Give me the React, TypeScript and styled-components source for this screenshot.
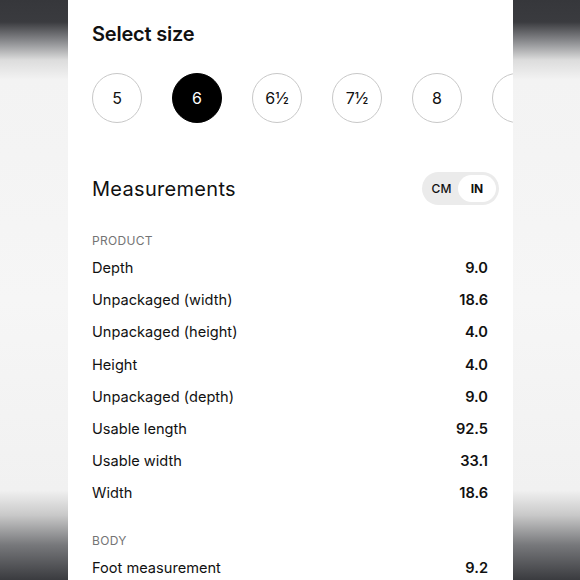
import React, { FC, useState } from "react";
import styled, { createGlobalStyle } from "styled-components";

const GlobalStyle = createGlobalStyle`
  html, body {
    margin: 0;
    padding: 0;
  }
  body {
    font-family: Inter, "Noto Sans", "Liberation Sans", sans-serif;
    color: #111;
    -webkit-font-smoothing: antialiased;
  }
`;

const Backdrop = styled.div`
  width: 580px;
  height: 580px;
  overflow: hidden;
  display: flex;
  padding-left: 68px;
  box-sizing: border-box;
  background: linear-gradient(
    180deg,
    #36373b 0px,
    #3a3b3f 22px,
    #8d8e91 42px,
    #dcdcdc 60px,
    #f3f3f3 80px,
    #f6f6f6 300px,
    #f1f1f1 490px,
    #c9c9c9 515px,
    #77787b 545px,
    #3a3b3f 580px
  );
`;

const Panel = styled.div`
  width: 445px;
  height: 580px;
  background: #fff;
  overflow: hidden;
  box-sizing: border-box;
  padding: 22px 25px 0 24px;
`;

const Title = styled.h2`
  margin: 0;
  font-size: 20px;
  line-height: 24px;
  font-weight: 600;
  letter-spacing: -0.2px;
`;

const SizeRow = styled.div`
  display: flex;
  gap: 30px;
  margin-top: 27px;
`;

const SizeButton = styled.button<{ $active?: boolean }>`
  flex: 0 0 auto;
  width: 50px;
  height: 50px;
  border-radius: 50%;
  box-sizing: border-box;
  border: 1.5px solid ${(p) => (p.$active ? "#000" : "#c8c8c8")};
  background: ${(p) => (p.$active ? "#000" : "#fff")};
  color: ${(p) => (p.$active ? "#fff" : "#111")};
  font-family: inherit;
  font-size: 16px;
  display: flex;
  align-items: center;
  justify-content: center;
  padding: 0;
  cursor: pointer;
`;

const Header = styled.div`
  display: flex;
  align-items: center;
  justify-content: space-between;
  margin-top: 49px;
  height: 33px;
`;

const Heading = styled.h3`
  margin: 0;
  font-size: 20px;
  font-weight: 400;
  letter-spacing: 0.3px;
`;

const Toggle = styled.div`
  display: flex;
  align-items: stretch;
  width: 77px;
  height: 33px;
  margin-right: -11px;
  box-sizing: border-box;
  padding: 3px;
  border-radius: 17px;
  background: #ebebeb;
`;

const ToggleOption = styled.button<{ $active?: boolean }>`
  flex: ${(p) => (p.$active ? "0 0 38px" : "1 1 auto")};
  border: none;
  border-radius: 14px;
  padding: 0;
  font-family: inherit;
  font-size: 12px;
  font-weight: ${(p) => (p.$active ? 700 : 500)};
  color: #111;
  background: ${(p) => (p.$active ? "#fff" : "transparent")};
  cursor: pointer;
`;

const GroupLabel = styled.div<{ $gap: number }>`
  margin-top: ${(p) => p.$gap}px;
  font-size: 12px;
  line-height: 16px;
  letter-spacing: 0.3px;
  color: #747474;
  text-transform: uppercase;
`;

const List = styled.div`
  margin-top: 3px;
`;

const Row = styled.div`
  display: flex;
  align-items: center;
  justify-content: space-between;
  height: 32.2px;
  font-size: 14.6px;
`;

const Value = styled.span`
  font-weight: 600;
`;

// last size is only peeking in from the edge, its label is scrolled out of view
const sizes = ["5", "6", "6½", "7½", "8", ""];

const groups = [
  {
    name: "Product",
    gap: 28,
    rows: [
      ["Depth", "9.0"],
      ["Unpackaged (width)", "18.6"],
      ["Unpackaged (height)", "4.0"],
      ["Height", "4.0"],
      ["Unpackaged (depth)", "9.0"],
      ["Usable length", "92.5"],
      ["Usable width", "33.1"],
      ["Width", "18.6"],
    ],
  },
  {
    name: "Body",
    gap: 23,
    rows: [["Foot measurement", "9.2"]],
  },
];

const App: FC = () => {
  const [size, setSize] = useState("6");
  const [unit, setUnit] = useState("IN");

  return (
    <>
      <GlobalStyle />
      <Backdrop>
        <Panel>
          <Title>Select size</Title>
          <SizeRow>
            {sizes.map((s, i) => (
              <SizeButton key={i} $active={s === size} onClick={() => setSize(s)}>
                {s}
              </SizeButton>
            ))}
          </SizeRow>

          <Header>
            <Heading>Measurements</Heading>
            <Toggle>
              {["CM", "IN"].map((u) => (
                <ToggleOption key={u} $active={u === unit} onClick={() => setUnit(u)}>
                  {u}
                </ToggleOption>
              ))}
            </Toggle>
          </Header>

          {groups.map((g) => (
            <div key={g.name}>
              <GroupLabel $gap={g.gap}>{g.name}</GroupLabel>
              <List>
                {g.rows.map(([label, value]) => (
                  <Row key={label}>
                    <span>{label}</span>
                    <Value>{value}</Value>
                  </Row>
                ))}
              </List>
            </div>
          ))}
        </Panel>
      </Backdrop>
    </>
  );
};

export default App;
